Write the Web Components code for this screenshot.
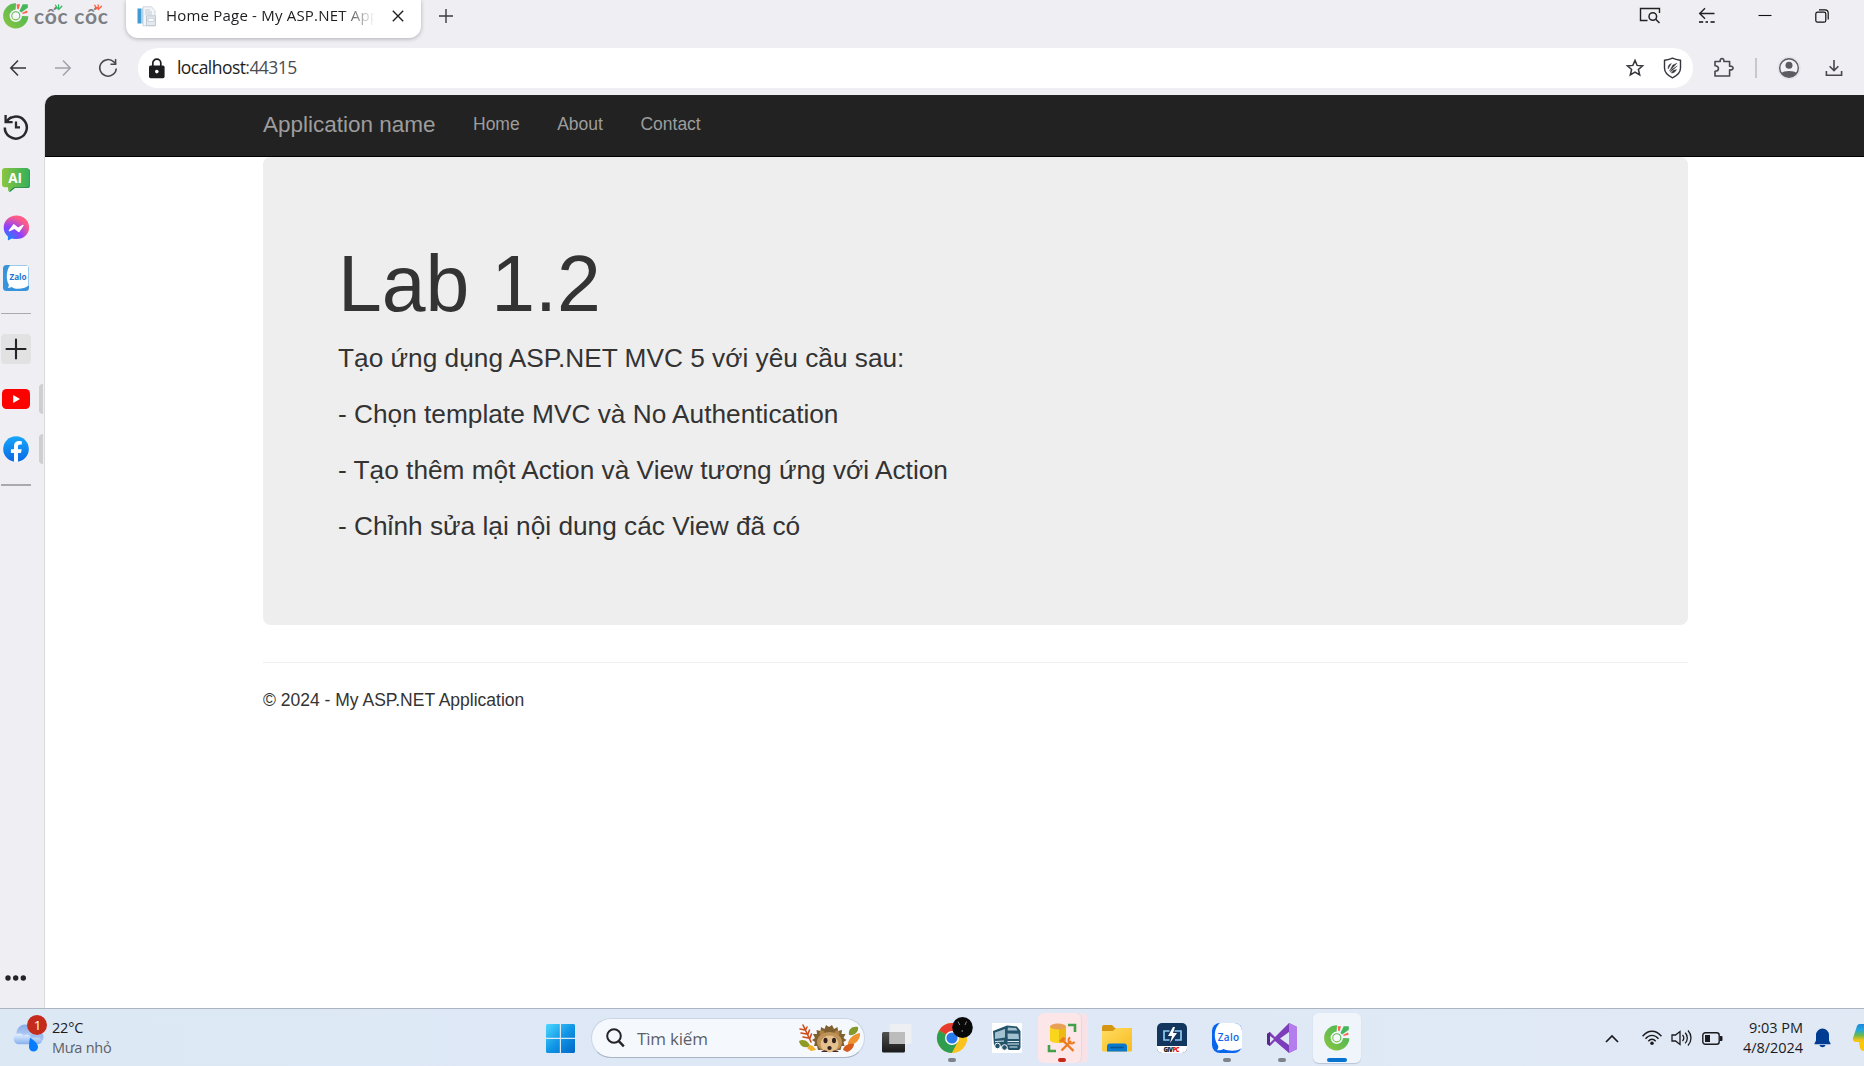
<!DOCTYPE html>
<html lang="vi"><head><meta charset="utf-8"><title>Home Page - My ASP.NET Application</title>
<style>html,body{margin:0;height:100%;overflow:hidden;background:#efeef3}</style></head><body>
<desktop-screen></desktop-screen>
<script>
const UI='"Open Sans","Noto Sans",sans-serif';
function define(name,css,html){
  const t=document.createElement('template');
  t.innerHTML=`<style>*{box-sizing:border-box}${css}</style>${html}`;
  customElements.define(name,class extends HTMLElement{
    constructor(){super();this.attachShadow({mode:'open'}).append(t.content.cloneNode(true));}
  });
}
const COC=`<defs><linearGradient id="cg" x1="0" x2="1" y1="1" y2="0"><stop stop-color="#8cc63f"/><stop offset="1" stop-color="#3fb45c"/></linearGradient></defs>
<path d="M13 0.3A12.6 12.6 0 1 0 25.3 13.3L17.8 13A5.3 5.3 0 1 1 12.6 7.6Z" fill="url(#cg)"/><circle cx="12.8" cy="12.8" r="5.4" fill="url(#cg)" stroke="#f4f6fa" stroke-width="1.6"/><circle cx="12.8" cy="12.8" r="3.5" fill="#f4f8fa"/>
<path d="M13.6 1.2L17 1.2 15.6 6.2 14.3 6Z M19.3 9.8L24 7.6 24.6 9.8 19.6 11.1Z" fill="#ff6545"/><path d="M19.7 1.2L24.8 1.2 24.8 4.8 18.2 9.5 16.4 8Z" fill="#45b65a"/>`;
/* each icon: [width, height, markup], drawn one unit per pixel */
const ICONS={
coccoc:[26,26,COC],
bursts:[60,10,`<g fill="none" stroke-width="1.3" stroke-linecap="round"><path d="M2.6 1.3l1.7 3.4M5.6.8l0 4M8.8 2.2L5.7 5.6" stroke="#36b865"/><path d="M41.8 1.3l2 3.4M45.2.8l0 4M48.4 2.2L45.3 5.6" stroke="#ff5c3e"/></g>`],
favicon:[20,21,`<path d="M.5 2.5h4v15h-4z" fill="#3e9ad4"/><path d="M4.5 2.5h1.5v15h-1.5z" fill="#a8d4ef"/><path d="M6 .8h8.5l3.5 4v15H6z" fill="#f3f5f8" stroke="#c4ccd5" stroke-width=".8"/><path d="M8 4h5M8 6h7M8 8h7" stroke="#b5bec9" stroke-width=".8"/><path d="M9.5 9.8h9v9.8h-9z" fill="#e4e9f0" stroke="#b6bfca" stroke-width=".8"/><path d="M11 12.3h6v3h-6z" fill="#fff" stroke="#aeb7c4" stroke-width=".6"/>`],
close:[12,12,`<path d="M.8.8l10.4 10.4M11.2.8L.8 11.2" stroke="#1d1d20" stroke-width="1.35"/>`],
plus:[16,16,`<path d="M8 1v14M1 8h14" stroke="#3b3b40" stroke-width="1.4"/>`],
tabsearch:[22,18,`<path d="M8.5 13.5H1.5V1.5H20.5V6" fill="none" stroke="#222" stroke-width="1.4"/><circle cx="13.8" cy="9.5" r="3.8" fill="none" stroke="#222" stroke-width="1.5"/><path d="M16.7 12.3l3.8 3.7" stroke="#222" stroke-width="1.5"/>`],
sidearrow:[18,16,`<path d="M16.5 6.5H1.8M7 1.2L1.7 6.5 7 11.8" fill="none" stroke="#222" stroke-width="1.4"/><path d="M1 15h4.2M7.5 15h2.5M12.5 15h4.2" stroke="#111" stroke-width="1.3"/>`],
min:[14,14,`<path d="M.5 7.5h13" stroke="#111" stroke-width="1.1"/>`],
restore:[14,14,`<rect x=".8" y="3.2" width="10" height="10" rx="1.8" fill="none" stroke="#111" stroke-width="1.2"/><path d="M4 .8h6a3.2 3.2 0 013.2 3.2v6.5" fill="none" stroke="#111" stroke-width="1.2"/>`],
back:[18,18,`<path d="M17 9H2M9 1.6L1.8 9 9 16.4" fill="none" stroke="#35353b" stroke-width="1.5"/>`],
forward:[18,18,`<path d="M1 9h15M9 1.6L16.2 9 9 16.4" fill="none" stroke="#a2a1a7" stroke-width="1.5"/>`],
reload:[20,20,`<path d="M18.3 10.5A8.3 8.3 0 1 1 15.8 3.9L18 6" fill="none" stroke="#47474d" stroke-width="1.5"/><path d="M17.600 1v5.200H12.500" fill="none" stroke="#47474d" stroke-width="1.5"/>`],
lock:[18,21,`<rect x="1" y="7.6" width="15.6" height="12.6" rx="1.6" fill="#1d1d20"/><path d="M4.8 8V5.2a4 4 0 018 0V8" fill="none" stroke="#1d1d20" stroke-width="1.7"/><circle cx="8.8" cy="13.6" r="1.8" fill="#fff"/>`],
star:[18,18,`<path d="M9 1.4l2.1 5 5.5.5-4.2 3.6 1.3 5.5L9 13.1 4.3 16l1.3-5.5L1.4 6.9l5.5-.5z" fill="none" stroke="#35353b" stroke-width="1.5"/>`],
shield:[19,22,`<path d="M9.5 1.2C12.8 2.8 15 3 17.5 3.3V11c0 4.5-3.2 7.5-8 9.8-4.8-2.3-8-5.3-8-9.8V3.3C4 3 6.2 2.8 9.5 1.2z" fill="none" stroke="#35353b" stroke-width="1.4"/><path d="M8.400 6.500c-2.500.8-3.600 2.800-3.300 5.500zM14 6.200L9.800 8 6.400 14.200zM14.300 9L9 12.300 7.200 15.200zM13.500 12.500l-3.300 1L8.300 16c2.300.3 4.200-1 5.200-3.500z" fill="#35353b" stroke="#35353b" stroke-width=".4"/>`],
puzzle:[22,22,`<path d="M2 4.5H7.2C6.6 0.4 11.4 0.4 10.9 4.5H16.6V9.2C21.3 8.6 21.3 13.5 16.6 12.9V19H2V14.2C6.6 14.2 6.6 8.8 2 8.8Z" fill="none" stroke="#47474d" stroke-width="1.6" stroke-linejoin="round"/>`],
avatar:[24,24,`<circle cx="12" cy="12" r="11.6" fill="#e5e4e9"/><circle cx="12" cy="12" r="9.3" fill="#f1f0f5" stroke="#5a5a60" stroke-width="1.4"/><circle cx="12" cy="9.3" r="3.5" fill="#5a5a60"/><path d="M4.5 17.2C6 14.4 18 14.4 19.5 17.2A9.3 9.3 0 014.5 17.2z" fill="#5a5a60"/>`],
download:[18,18,`<path d="M9 1v10.5M4.6 7.2L9 11.6l4.4-4.4M1.4 12v4.2h15.2V12" fill="none" stroke="#47474d" stroke-width="1.6"/>`],
history:[26,26,`<path d="M3.1 8.4A11 11 0 1 1 1.8 13.5" fill="none" stroke="#29292d" stroke-width="2.5"/><path d="M2.6 1v7.2h7" fill="none" stroke="#29292d" stroke-width="2.3"/><path d="M2.6 8l5.4-5" stroke="#29292d" stroke-width="2"/><path d="M13 7.6v5.8h4" fill="none" stroke="#29292d" stroke-width="2.3"/>`],
ai:[28,24,`<path d="M25 1h1.3a1.6 1.6 0 011.6 1.6v15.6a1.8 1.8 0 01-1.8 1.8H13l-5 4-1-.8z" fill="#278b4c"/><path d="M3 0h21.6a2.6 2.6 0 012.6 2.6v14a2.6 2.6 0 01-2.6 2.6H11.8L6.3 23.6 6 19.2H3a3 3 0 01-3-3V3a3 3 0 013-3z" fill="url(#ag)"/><defs><linearGradient id="ag"><stop stop-color="#8bc53f"/><stop offset="1" stop-color="#36b05b"/></linearGradient></defs><text x="6.3" y="14.6" font-family="Open Sans" font-weight="700" font-size="13.5" fill="#fff">AI</text>`],
messenger:[27,27,`<defs><radialGradient id="mg" cx=".15" cy="1" r="1.1"><stop stop-color="#0a8dff"/><stop offset=".5" stop-color="#8b41ff"/><stop offset=".9" stop-color="#ff5b87"/></radialGradient></defs><path d="M13.5.6C6.2.6.7 5.8.7 12.6c0 3.7 1.5 6.7 4.2 8.8v4.2l4-2.1c1.5.4 3 .6 4.6.6 7.3 0 12.6-5 12.6-11.6C26.100 5.800 20.800.6 13.500.6z" fill="url(#mg)"/><path d="M6.400 15.700L10.700 9.800 15 13.300 20 10.400 15.800 16.500 11.500 13.200z" fill="#fff" stroke="#fff" stroke-width="1.400" stroke-linejoin="round"/>`],
zalo:[26,26,`<rect width="26" height="26" rx="3.500" fill="#3794dc"/><path d="M7 .5H25.500V20.500C21 24.200 13 25 8.500 22 7.300 22.800 6 22.900 4.800 22.500 5.900 21.400 6 20.300 5.600 19.300 2.500 13.500 3.700 4.500 7 .5z" fill="#fff"/><text x="6.500" y="14.500" font-family="Open Sans" font-weight="700" font-size="8.200" textLength="17" fill="#2878cf">Zalo</text>`],
add:[30,30,`<rect width="30" height="30" rx="4" fill="#e2e2e3"/><path d="M15 5.500v19M5.500 15h19" stroke="#242427" stroke-width="2.100" stroke-linecap="round"/>`],
youtube:[28,20,`<rect width="28" height="20" rx="4.500" fill="#f00"/><path d="M11.200 6v8L18 10z" fill="#fff"/>`],
facebook:[26,26,`<defs><linearGradient id="fg" x2="0" y2="1"><stop stop-color="#18a7fb"/><stop offset="1" stop-color="#0869e5"/></linearGradient></defs><circle cx="13" cy="13" r="12.800" fill="url(#fg)"/><path d="M11 25.800V17H7.900v-3.700H11v-2.700c0-3.900 2-5.600 5.300-5.600l2.500.2v3.300h-1.700c-1.600 0-2.100.8-2.100 2.100v2.700h3.700L18 17h-3v8.800a13 13 0 01-4 0z" fill="#fff"/>`],
dots:[22,6,`<g fill="#242427"><circle cx="3" cy="3" r="2.700"/><circle cx="10.700" cy="3" r="2.700"/><circle cx="18.300" cy="3" r="2.700"/></g>`],
weather:[36,38,`<defs><linearGradient id="w1" x2="0" y2="1"><stop stop-color="#86abe9"/><stop offset="1" stop-color="#c9dffa"/></linearGradient><linearGradient id="w2" x2="0" y2="1"><stop stop-color="#e8f2ff"/><stop offset="1" stop-color="#86afef"/></linearGradient></defs><circle cx="12" cy="18" r="8.500" fill="url(#w1)"/><circle cx="24" cy="22" r="6.500" fill="#9cbdf0"/><path d="M6 18.500a5 5 0 014.800 2.300c3-2.500 6-.8 7.200 2l7-.4a5 3.500 0 010 6.800H6A5.300 5.300 0 016 18.500z" fill="url(#w2)"/><path d="M17 22.500c4 3 8 6 8 9.500a4.500 4.500 0 01-9 0c0-4 .500-6 1-9.500z" fill="#087cff"/><circle cx="24" cy="10" r="10" fill="#c42b1c"/><text x="20.800" y="15" font-family="Open Sans" font-size="13.500" fill="#fff">1</text>`],
start:[29,29,`<defs><linearGradient id="sg" gradientUnits="userSpaceOnUse" x2="29" y2="29"><stop stop-color="#4fd8ff"/><stop offset=".5" stop-color="#1197e6"/><stop offset="1" stop-color="#0067c6"/></linearGradient></defs><path d="M1 0h12.800v13.800H0V1zM15 0h13l1 1v12.800H15zM0 15h13.800v14H1l-1-1zM15 15h14v13l-1 1H15z" fill="url(#sg)"/>`],
search:[19,20,`<circle cx="8" cy="8" r="6.800" fill="none" stroke="#242428" stroke-width="2"/><path d="M12.800 13.200l5 5.200" stroke="#242428" stroke-width="2.400"/>`],
hedgehog:[62,30,`<g fill="none" stroke="#cf4a18" stroke-width="1.600" stroke-linecap="round"><path d="M13 19L5 2M7 7L2 6M8.500 11L3 10M10.500 15L5 14M7.500 7l1.500-3M10 11l1.500-4M12 15l1.500-4"/></g><path d="M1 18C6 15 11 19 12 23 6 26 2 23 1 18z" fill="#8e9a24"/><path d="M12 22l3 1 3 4-5 1-4-3z" fill="#f2b02b"/><path d="M51 12C50 6 54 3 60 4 61 9 56 13 51 12z" fill="#83992b"/><path d="M50 20c1-5 6-9 12-10 1 6-5 12-12 13z" fill="#ee9230"/><path d="M45 27c1-5 6-7 11-6 0 3-3 7-7 8z" fill="#d65a1c"/><path d="M14 17l3-2-2-4 4 0-.5-4 4 1 .5-4 3.500 2L28 2l3 2L34 2l2 4 3.500-2 .5 4 4-1-.5 4 4 0-2 4 3 2-3 2 1 4-3 0-1 4H20l-1-4-3 0 1-4z" fill="#80602f"/><circle cx="24" cy="10" r="2.500" fill="#ae8147"/><circle cx="39" cy="10" r="2.500" fill="#ae8147"/><ellipse cx="31.500" cy="19" rx="12.500" ry="10" fill="#bd9357"/><ellipse cx="31.500" cy="21" rx="9" ry="8.500" fill="#e3c08c"/><ellipse cx="27.500" cy="17.500" rx="2" ry="2.800" fill="#302020"/><ellipse cx="36" cy="17.500" rx="2" ry="2.800" fill="#302020"/><ellipse cx="31.500" cy="25" rx="2.200" ry="2" fill="#352322"/><path d="M23 29a4 3.500 0 017 0zM34 29a4 3.500 0 017 0z" fill="#472b28"/>`],
taskview:[30,29,`<defs><linearGradient id="t1" x2="0" y2="1"><stop stop-color="#515151"/><stop offset="1" stop-color="#191919"/></linearGradient></defs><rect y="8" width="23" height="20.500" rx="1.500" fill="url(#t1)"/><path d="M9 0h19a1.500 1.500 0 011.500 1.500V20H7.500V1.500z" fill="#eef0f2" fill-opacity=".9"/><path d="M7.500 8H23v12H7.500z" fill="#bcbcbd"/>`],
chrome:[38,38,`<g transform="translate(0,5)"><circle cx="15" cy="16" r="15" fill="#fbbc05"/><path d="M15 16L2 8.500A15 15 0 0128 8.500z" fill="#e63b2e"/><path d="M2 8.500A15 15 0 0015 31l6-11.500-6-3.500z" fill="#2f9d50"/><path d="M15 9h13.300A15 15 0 0115 31l6.200-11.500z" fill="#fcc31e"/><circle cx="15" cy="16" r="7" fill="#fff"/><circle cx="15" cy="16" r="5.600" fill="#2878ee"/></g><ellipse cx="25.500" cy="10.500" rx="10.300" ry="10.500" fill="#090909"/><path d="M21 4.500l1.800 3.500M29.500 4.500l-1.500 3.500M25.200 13v2" stroke="#888" stroke-width="1"/>`],
truck:[30,30,`<path fill="#fff" d="M0 0h30v30H0z"/><path d="M1 8L15 2.500 25 3.500 28.500 8v17l-1.500 2H17l-3-3-12-1.500z" fill="#24546c"/><path d="M3 9.500l10-3.500v8.500L3 16zM16 4.500l8 .6 1.500 2.400H15.500zM15.500 10.500l11 .3.5 5.200H15.800z" fill="#a3c2cf"/><path d="M3 18.500l9-.5M15.500 18.500H27M15.500 21H27M17.500 24h8" stroke="#dfeaf0" stroke-width="1"/><circle cx="5.500" cy="23" r="2.800" fill="#24546c" stroke="#fff"/><circle cx="12.500" cy="24.500" r="2.800" fill="#24546c" stroke="#fff"/>`],
sql:[30,30,`<path d="M3 3v14c0 4 16 4 16 0V3z" fill="#f9d51d"/><path d="M12 3h7v14c0 2-3 3-7 3z" fill="#edb913"/><ellipse cx="11" cy="3.500" rx="8" ry="3" fill="#e8a056"/><path d="M21 2h7v7M2 22v6h7" fill="none" stroke="#41a048" stroke-width="2.600"/><path d="M15 16.500L26.500 28M24 18L14.500 27.500" stroke="#ed7a21" stroke-width="2.400"/><path d="M12 18l4-4 3 1.500-4 4z" fill="#ed7a21"/><path d="M23.200 14.500a3.200 3.200 0 104.300 4.300" fill="none" stroke="#ed7a21" stroke-width="2"/>`],
explorer:[30,28,`<path d="M0 3a2 2 0 012-2h8l3 3h15a2 2 0 012 2v4H0z" fill="#d59613"/><path d="M0 7h11l3-3h14a2 2 0 012 2v20a1.500 1.500 0 01-1.500 1.500h-27A1.500 1.500 0 010 26z" fill="url(#eg)"/><defs><linearGradient id="eg" x2="1" y2="1"><stop stop-color="#ffdc62"/><stop offset="1" stop-color="#f8bb20"/></linearGradient></defs><path d="M5 27.500v-5a3 3 0 013-3h14a3 3 0 013 3v5z" fill="#0879cf"/><path d="M9 23.500h12" stroke="#095491" stroke-width="1.500" stroke-linecap="round"/>`],
givpc:[30,30,`<rect width="30" height="30" rx="5" fill="#12365d"/><path d="M0 23h30v2a5 5 0 01-5 5H5a5 5 0 01-5-5z" fill="#fff"/><path d="M12.500 8H7v9h5.500M17.500 8H24v9h-6" fill="none" stroke="#8fcaf4" stroke-width="1.700"/><path d="M16 4l-5 9h4l-2 7 7-10h-4l2-6z" fill="#fff"/><text x="6.500" y="29" font-family="Open Sans" font-weight="800" font-size="6" textLength="16" fill="#222">GIV<tspan fill="#e11">PC</tspan></text>`],
zalo2:[30,30,`<rect width="30" height="30" rx="8" fill="#0866ed"/><path d="M10 0h12a8 8 0 018 8v17c-6 4-14 3-18.500 1-2 1.200-4.500 1.500-6.500 1 1.500-1.600 1.500-3.200 1-4.500C1 15 2 5 8 0z" fill="#fff"/><text x="5.700" y="17.500" font-family="Open Sans" font-weight="600" font-size="10" textLength="21.500" fill="#1264e8">Zalo</text>`],
vs:[30,30,`<path d="M22 0L8 14 3 9 0 11v10l3 2 5-5L22 30 30 26V4zM3 13l4 3-4 4zM22 9v13l-9-6.500z" fill="#7d3cba" fill-rule="evenodd"/><path d="M22 0l8 4v22l-8 4z" fill="#b47ded"/><path d="M0 11l3-2v14l-3-2z" fill="#572885"/>`],
up:[14,9,`<path d="M1 8l6-6 6 6" fill="none" stroke="#1b1b1e" stroke-width="1.700"/>`],
wifi:[20,16,`<g fill="none" stroke="#1b1b1e" stroke-width="1.400"><path d="M.6 6.200C6-.4 14-.4 19.400 6.200"/><path d="M3.500 8.800c3.800-4.600 9.200-4.600 13 0M6.300 11.300c2.200-2.700 5.200-2.700 7.400 0"/></g><circle cx="10" cy="13.300" r="1.800" fill="#1b1b1e"/>`],
sound:[21,18,`<path d="M1 6h3.500L9 2.500v13L4.500 12H1z" fill="none" stroke="#1b1b1e" stroke-width="1.300"/><path d="M11.500 6c1.500 1.700 1.500 4.300 0 6M14.200 3.700c2.800 3 2.800 7.600 0 10.600M17 1.500c4 4.300 4 10.700 0 15" fill="none" stroke="#1b1b1e" stroke-width="1.300"/>`],
battery:[21,13,`<rect x=".8" y=".8" width="16.400" height="11.400" rx="2.500" fill="none" stroke="#1b1b1e" stroke-width="1.400"/><rect x="3" y="3" width="5" height="7" fill="#1b1b1e"/><path d="M18 4h1.500a1 1 0 011 1v3a1 1 0 01-1 1H18z" fill="#1b1b1e"/>`],
bell:[17,20,`<path d="M8.500.5A6.500 6.500 0 0115 7v5.500l1.500 3v.8H.5v-.8l1.500-3V7A6.500 6.500 0 018.500.5z" fill="#003c91"/><path d="M5.500 17h6c-.8 3-5.200 3-6 0z" fill="#003c91"/>`],
copilot:[28,30,`<defs><linearGradient id="cp" x2="0" y2="1"><stop stop-color="#1b88df"/><stop offset=".35" stop-color="#26a9d8"/><stop offset=".62" stop-color="#69b94c"/><stop offset=".9" stop-color="#f6c315"/></linearGradient></defs><path d="M7 1h21v18H3a3 3 0 01-3-4l4-12a3 3 0 013-2z" fill="url(#cp)"/><path d="M6 19h20v9H11a4 4 0 01-4-3z" fill="#fbc60c"/>`]
};
customElements.define('ui-icon',class extends HTMLElement{
  constructor(){super();this.attachShadow({mode:'open'});}
  connectedCallback(){const[w,h,m]=ICONS[this.getAttribute('name')];
    this.shadowRoot.innerHTML=`<style>:host{display:block;flex:none;width:${w}px;height:${h}px}svg{display:block;overflow:visible}</style><svg width="${w}" height="${h}" viewBox="0 0 ${w} ${h}">${m}</svg>`;}
});
define('brand-logo',`:host{display:flex;gap:5px;width:108px;padding:3px 0 0 3px;height:38px}.word{position:relative;width:76px;height:30px;font:700 21px/22px Lato,sans-serif;color:#7c7f84;white-space:nowrap;letter-spacing:.75px;padding-top:2px}.word ui-icon{position:absolute;left:19px;top:1px}`,
`<ui-icon name="coccoc"></ui-icon><div class="word">cốc cốc<ui-icon name="bursts"></ui-icon></div>`);
define('browser-tab',`:host{display:flex;align-items:flex-start;width:295px;height:38px;margin-left:18px;background:#fff;border-radius:0 0 12px 12px;box-shadow:0 1px 4px #0004;padding:6px 0 0 11px}span{width:209px;margin:-1px 0 0 9px;font:15px/20px ${UI};color:#1d1d20;white-space:nowrap;overflow:hidden;letter-spacing:.2px;-webkit-mask-image:linear-gradient(90deg,#000 175px,transparent 209px);mask-image:linear-gradient(90deg,#000 175px,transparent 209px)}.x{margin:4px 0 0 17px}`,
`<ui-icon name="favicon"></ui-icon><span><slot></slot></span><ui-icon class="x" name="close"></ui-icon>`);
define('tab-strip',`:host{display:flex;height:42px;align-items:flex-start}.new{margin:8px 0 0 16.500px}.win{display:flex;margin-left:auto;align-items:flex-start;padding:7px 35px 0 0}.win>:nth-child(2){margin-left:37px}.win>:nth-child(3){margin:1px 0 0 42px}.win>:nth-child(4){margin:2px 0 0 43px}`,
`<brand-logo></brand-logo><browser-tab>Home Page - My ASP.NET Application</browser-tab><ui-icon class="new" name="plus"></ui-icon><div class="win"><ui-icon name="tabsearch"></ui-icon><ui-icon name="sidearrow"></ui-icon><ui-icon name="min"></ui-icon><ui-icon name="restore"></ui-icon></div>`);
define('address-bar',`:host{display:flex;align-items:center;width:1555px;height:40px;margin-left:20px;background:#fff;border-radius:20px;padding:0 11px 0 10px}span{margin:-2px 0 0 11px;flex:1;font:17.5px/24px ${UI};letter-spacing:-.55px;color:#4b4b50}b{font-weight:400;color:#1d1d20}.s{margin-left:19px}`,
`<ui-icon name="lock"></ui-icon><span><b>localhost</b>:44315</span><ui-icon name="star"></ui-icon><ui-icon class="s" name="shield"></ui-icon>`);
define('nav-toolbar',`:host{display:flex;align-items:center;height:52px;padding-left:9px}.f{margin-left:27px}.r{margin-left:26px}.p{margin-left:20px}i{width:2px;height:20px;background:#c8c7ce;margin-left:20px}.a{margin-left:20px}.d{margin-left:23.500px}`,
`<ui-icon name="back"></ui-icon><ui-icon class="f" name="forward"></ui-icon><ui-icon class="r" name="reload"></ui-icon><address-bar></address-bar><ui-icon class="p" name="puzzle"></ui-icon><i></i><ui-icon class="a" name="avatar"></ui-icon><ui-icon class="d" name="download"></ui-icon>`);
define('side-bar',`:host{display:flex;flex-direction:column;width:44px;height:913px;padding:19px 0 27px 2.500px;align-items:flex-start}.row{display:flex;align-items:center;margin-left:-.5px}.row i{width:4px;height:30px;background:#cfcfd2;border-radius:4px 0 0 4px;margin-left:9px}hr{border:0;margin:0 0 0 -1.500px;width:30px;height:1px;background:#aaa9ae}`,
`<ui-icon name="history"></ui-icon><ui-icon name="ai" style="margin:28px 0 0 -.5px"></ui-icon><ui-icon name="messenger" style="margin-top:23px"></ui-icon><ui-icon name="zalo" style="margin:23px 0 0 .5px"></ui-icon><hr style="margin-top:22px"><ui-icon name="add" style="margin:20px 0 0 -1.5px"></ui-icon><div class="row" style="margin-top:20px"><ui-icon name="youtube"></ui-icon><i></i></div><div class="row" style="margin-top:20px"><ui-icon name="facebook" style="margin:0 1px"></ui-icon><i></i></div><hr style="margin-top:20px;height:2px"><ui-icon name="dots" style="margin:auto 0 0 2.5px"></ui-icon>`);
define('site-nav',`:host{display:flex;height:62px;background:#222;border-bottom:1px solid #000;padding-left:218px;color:#9d9d9d;font:17.5px/25px "Liberation Sans",Arial,sans-serif;padding-top:17px;border-radius:10px 0 0 0}.b{font-size:22.5px;width:210px}span{margin-right:37.500px}`,
`<div class="b">Application name</div><span>Home</span><span>About</span><span>Contact</span>`);
define('hero-panel',`:host{display:block;width:1425px;height:468px;background:#eee;border-radius:7.500px;padding:84px 75px 0;color:#333}h1{margin:0 0 12px;font-size:78.750px;line-height:87px;font-weight:500;font-kerning:none}::slotted(p){margin:0 0 19px;font-size:26.250px;line-height:37px}`,
`<h1>Lab 1.2</h1><slot></slot>`);
define('web-page',`:host{display:block;flex:1;height:913px;background:#fff;border-left:1px solid #d9d9dd;border-radius:10px 0 0 0;font-family:"Liberation Sans",Arial,sans-serif;color:#333}main{margin-left:218px;width:1425px}hr{border:0;height:1px;background:#eee;margin:37px 0 25px}footer{font-size:17.500px;line-height:25px}`,
`<site-nav></site-nav><main><hero-panel><p>Tạo ứng dụng ASP.NET MVC 5 với yêu cầu sau:</p><p>- Chọn template MVC và No Authentication</p><p>- Tạo thêm một Action và View tương ứng với Action</p><p>- Chỉnh sửa lại nội dung các View đã có</p></hero-panel><hr><footer>© 2024 - My ASP.NET Application</footer></main>`);
define('weather-widget',`:host{display:flex;width:546px;padding-left:12.500px;font:14.500px/20px ${UI};color:#1b1b1e;letter-spacing:-.2px}div{padding:9px 0 0 3.500px}p{margin:0}p+p{color:#5c6068}ui-icon{margin-top:6px}`,
`<ui-icon name="weather"></ui-icon><div><p>22°C</p><p>Mưa nhỏ</p></div>`);
define('search-box',`:host{display:flex;align-items:center;width:274px;height:40px;margin:9px 0 0 16px;border-radius:20px;background:#f5f9fe;border:1px solid #c9d4e6;border-bottom-color:#a9b5c6;padding:0 4px 0 14px}span{flex:1;margin:1px 0 0 12px;color:#5c6066;font:17px/24px ${UI};letter-spacing:-.2px}`,
`<ui-icon name="search"></ui-icon><span>Tìm kiếm</span><ui-icon name="hedgehog"></ui-icon>`);
define('task-button',`:host{display:flex;position:relative;width:55px;height:58px;flex:none;align-items:center;justify-content:center}:host([dot])::after{content:"";position:absolute;left:23px;top:49px;width:8px;height:4px;border-radius:2px;background:#7d828b}:host([dot=red])::after{background:#c42b1c}:host([dot=active])::after{left:17px;width:20px;background:#0874d1}.bg{display:flex;align-items:center;justify-content:center;width:48px;height:50px;border-radius:6px}:host([dot=red]) .bg{background:#fce6e8;width:43px;margin-left:-6px;box-shadow:1px 0 0 #dcdce8,7px 0 0 #f9e2e7}:host([dot=active]) .bg{background:#f0f5fc;box-shadow:0 1px 1px #b9c4d4}`,`<div class="bg"><slot></slot></div>`);
define('system-tray',`:host{display:flex;flex:none;margin-left:auto;width:259px;height:58px;align-items:center}time{width:66px;margin-left:20px;text-align:right;font:14.500px/20px ${UI};color:#1b1b1e;white-space:nowrap;display:block;letter-spacing:-.05px}`,
`<ui-icon name="up"></ui-icon><ui-icon name="wifi" style="margin-left:23px"></ui-icon><ui-icon name="sound" style="margin-left:9px"></ui-icon><ui-icon name="battery" style="margin-left:10px"></ui-icon><time>9:03 PM<br>4/8/2024</time><ui-icon name="bell" style="margin-left:11.5px"></ui-icon><ui-icon name="copilot" style="margin-left:21.5px"></ui-icon>`);
define('task-bar',`:host{display:flex;height:58px;background:linear-gradient(90deg,#dde8f5,#dee8f6 50%,#e1e9f5);border-top:1px solid #abb4c0;overflow:hidden}.s{margin-top:15px}.apps{display:flex;margin-left:4.500px}`,
`<weather-widget></weather-widget><ui-icon class="s" name="start"></ui-icon><search-box></search-box><div class="apps">
<task-button><ui-icon name="taskview"></ui-icon></task-button><task-button dot><ui-icon name="chrome" style="margin:-4px -8px 0 0"></ui-icon></task-button><task-button><ui-icon name="truck"></ui-icon></task-button><task-button dot="red"><ui-icon name="sql" style="margin-left:5px"></ui-icon></task-button><task-button><ui-icon name="explorer"></ui-icon></task-button><task-button><ui-icon name="givpc"></ui-icon></task-button><task-button dot><ui-icon name="zalo2"></ui-icon></task-button><task-button dot><ui-icon name="vs"></ui-icon></task-button><task-button dot="active"><ui-icon name="coccoc"></ui-icon></task-button></div><system-tray></system-tray>`);
define('desktop-screen',`:host{display:flex;flex-direction:column;width:1864px;height:1066px;background:#efeef3;overflow:hidden}.mid{display:flex;height:913px;overflow:hidden}nav-toolbar{margin-bottom:1px}`,
`<tab-strip></tab-strip><nav-toolbar></nav-toolbar><div class="mid"><side-bar></side-bar><web-page></web-page></div><task-bar></task-bar>`);
</script></body></html>
